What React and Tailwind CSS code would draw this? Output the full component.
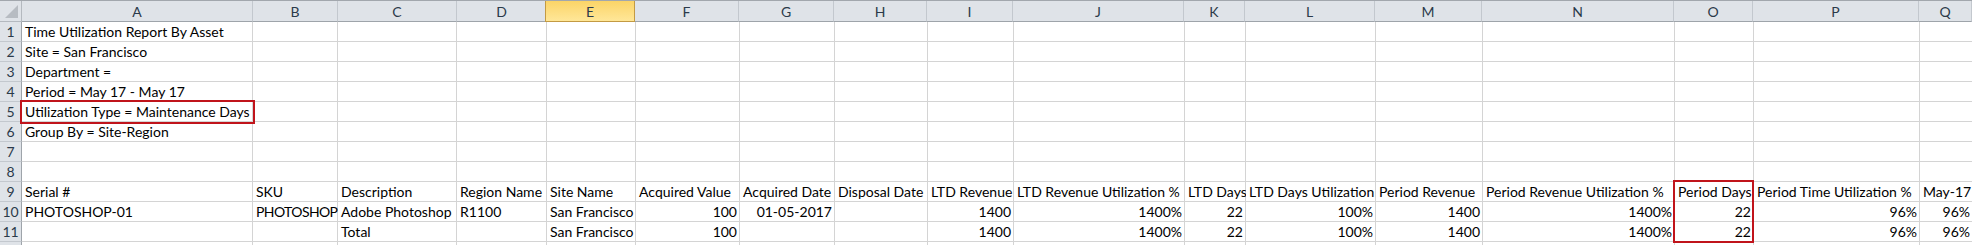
import React from 'react';

const COLS = [
  { key: 'A', w: 'w-[231px]' },
  { key: 'B', w: 'w-[85px]' },
  { key: 'C', w: 'w-[119px]' },
  { key: 'D', w: 'w-[90px]' },
  { key: 'E', w: 'w-[89px]' },
  { key: 'F', w: 'w-[104px]' },
  { key: 'G', w: 'w-[95px]' },
  { key: 'H', w: 'w-[93px]' },
  { key: 'I', w: 'w-[86px]' },
  { key: 'J', w: 'w-[171px]' },
  { key: 'K', w: 'w-[61px]' },
  { key: 'L', w: 'w-[130px]' },
  { key: 'M', w: 'w-[107px]' },
  { key: 'N', w: 'w-[192px]' },
  { key: 'O', w: 'w-[79px]' },
  { key: 'P', w: 'w-[166px]' },
  { key: 'Q', w: 'w-[53px]' },
];

// cell content per row: string = left aligned, { r: '...' } = right aligned
const ROWS = [
  { A: 'Time Utilization Report By Asset' },
  { A: 'Site = San Francisco' },
  { A: 'Department =' },
  { A: 'Period = May 17 - May 17' },
  { A: 'Utilization Type = Maintenance Days', boxA: true },
  { A: 'Group By = Site-Region' },
  {},
  {},
  {
    A: 'Serial #', B: 'SKU', C: 'Description', D: 'Region Name', E: 'Site Name',
    F: 'Acquired Value', G: 'Acquired Date', H: 'Disposal Date', I: 'LTD Revenue',
    J: 'LTD Revenue Utilization %', K: 'LTD Days', L: 'LTD Days Utilization',
    M: 'Period Revenue', N: 'Period Revenue Utilization %', O: 'Period Days',
    P: 'Period Time Utilization %', Q: 'May-17', boxO: true,
  },
  {
    A: 'PHOTOSHOP-01', B: 'PHOTOSHOP', C: 'Adobe Photoshop', D: 'R1100', E: 'San Francisco',
    F: { r: '100' }, G: { r: '01-05-2017' }, I: { r: '1400' }, J: { r: '1400%' },
    K: { r: '22' }, L: { r: '100%' }, M: { r: '1400' }, N: { r: '1400%' },
    O: { r: '22' }, P: { r: '96%' }, Q: { r: '96%' },
  },
  {
    C: 'Total', E: 'San Francisco',
    F: { r: '100' }, I: { r: '1400' }, J: { r: '1400%' },
    K: { r: '22' }, L: { r: '100%' }, M: { r: '1400' }, N: { r: '1400%' },
    O: { r: '22' }, P: { r: '96%' }, Q: { r: '96%' },
  },
  {},
];

const font = "font-['Lato','Liberation_Sans',sans-serif]";

const Cell = ({ col, value, row }) => {
  const right = value && typeof value === 'object';
  const text = right ? value.r : value;
  const boxA = col.key === 'A' && row.boxA;
  const boxO = col.key === 'O' && row.boxO;
  return (
    <div
      className={`relative shrink-0 h-[20px] border-r border-b border-[#d4d4d4] bg-white flex items-center whitespace-nowrap text-[14px] text-black px-[3px] ${col.w} ${right ? 'justify-end pr-[2px]' : 'justify-start'} ${boxA ? 'z-10 outline-2 outline-[#c0141b]' : ''} ${text === 'PHOTOSHOP' ? 'tracking-[-0.6px]' : ''}`}
    >
      {text}
      {boxO && (
        <div className="absolute -left-[2px] -top-[2px] z-10 h-[63px] w-[81px] border-2 border-[#c0141b] pointer-events-none" />
      )}
    </div>
  );
};

export default function App() {
  return (
    <div className={`w-[1972px] h-[245px] overflow-hidden bg-white ${font}`}>
      {/* column headers */}
      <div className="flex h-[22px] border-t border-[#a2a7ad]">
        <div className="relative shrink-0 w-[22px] h-[21px] bg-[#dfe3e8] border-r border-b border-[#b4b9bf] overflow-hidden">
          <div className="absolute right-[3px] bottom-[3px] w-0 h-0 border-l-[13px] border-l-transparent border-b-[13px] border-b-[#b7bcc2]" />
        </div>
        {COLS.map((c) =>
          c.key === 'E' ? (
            <div
              key={c.key}
              className="shrink-0 -ml-px w-[90px] h-[21px] flex items-center justify-center text-[14px] text-[#2b3a4a] bg-gradient-to-b from-[#fbd466] to-[#ffe798] border-x border-b border-[#c39a43]"
            >
              {c.key}
            </div>
          ) : (
            <div
              key={c.key}
              className={`shrink-0 h-[21px] flex items-center justify-center text-[14px] text-[#2b3a4a] bg-[#dfe3e8] border-r border-b border-r-[#c3c8ce] border-b-[#9ea4aa] ${c.key === 'D' ? 'w-[89px] border-r-0' : c.w}`}
            >
              {c.key}
            </div>
          )
        )}
      </div>
      {ROWS.map((row, i) => (
        <div key={i} className="flex">
          <div className="shrink-0 w-[22px] h-[20px] bg-[#dfe3e8] border-r border-b border-r-[#9ea4aa] border-b-[#c3c8ce] flex items-center justify-center text-[14px] text-[#2b3a4a]">
            {i < 11 ? i + 1 : ''}
          </div>
          {COLS.map((c) => (
            <Cell key={c.key} col={c} value={row[c.key]} row={row} />
          ))}
        </div>
      ))}
    </div>
  );
}
